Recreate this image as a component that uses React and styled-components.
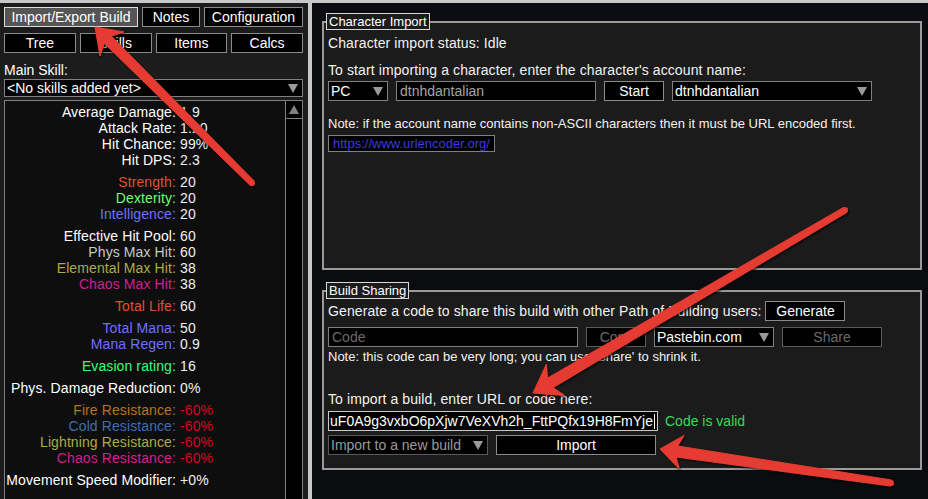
import styled, { createGlobalStyle } from 'styled-components';

const FONT = `"Liberation Sans", Arial, sans-serif`;

const C = {
    white: '#f2f2f2',
    phys: '#c8c8c8',
    str: '#e05030',
    dex: '#70ff70',
    int: '#7070ff',
    life: '#e05030',
    mana: '#7070ff',
    evasion: '#33ff77',
    fire: '#b97123',
    cold: '#3f6db3',
    lightning: '#adaa47',
    chaos: '#d02090',
    negative: '#dd0022',
};

const STATS = [
    [['Average Damage', '1.9'], ['Attack Rate', '1.20'], ['Hit Chance', '99%'], ['Hit DPS', '2.3']],
    [['Strength', '20', C.str], ['Dexterity', '20', C.dex], ['Intelligence', '20', C.int]],
    [['Effective Hit Pool', '60'], ['Phys Max Hit', '60', C.phys], ['Elemental Max Hit', '38', C.lightning], ['Chaos Max Hit', '38', C.chaos]],
    [['Total Life', '60', C.life]],
    [['Total Mana', '50', C.mana], ['Mana Regen', '0.9', C.mana]],
    [['Evasion rating', '16', C.evasion]],
    [['Phys. Damage Reduction', '0%']],
    [
        ['Fire Resistance', '-60%', C.fire, C.negative],
        ['Cold Resistance', '-60%', C.cold, C.negative],
        ['Lightning Resistance', '-60%', C.lightning, C.negative],
        ['Chaos Resistance', '-60%', C.chaos, C.negative],
    ],
    [['Movement Speed Modifier', '+0%']],
];

// red annotation arrows drawn over the screenshot
const ARROWS = [
    { tip: [95, 27], tail: [252, 183], headLen: 24, headHalf: 17, notch: 6, neck: 10, tailW: 6 },
    { tip: [533, 393], tail: [845, 210], headLen: 26, headHalf: 18, notch: 6, neck: 11, tailW: 6 },
    { tip: [660, 449], tail: [891, 483], headLen: 22, headHalf: 17, notch: 5, neck: 11, tailW: 6 },
];

function arrowShape({ tip, tail, headLen, headHalf, notch, neck, tailW }) {
    const dx = tail[0] - tip[0];
    const dy = tail[1] - tip[1];
    const len = Math.hypot(dx, dy);
    const ux = dx / len, uy = dy / len;
    const nx = -uy, ny = ux;
    const at = (d, w) => [tip[0] + ux * d + nx * w, tip[1] + uy * d + ny * w];
    const pts = [
        tip,
        at(headLen, headHalf),
        at(headLen - notch, neck / 2),
        [tail[0] + nx * tailW / 2, tail[1] + ny * tailW / 2],
        [tail[0] - nx * tailW / 2, tail[1] - ny * tailW / 2],
        at(headLen - notch, -neck / 2),
        at(headLen, -headHalf),
    ];
    return pts.map(p => p.map(v => v.toFixed(1)).join(',')).join(' ');
}

function App() {
    return (
        <Screen>
            <GlobalStyle />
            <TopStrip />
            <Body>
                <LeftPanel>
                    <TabRow>
                        <Tab $w={134} $active>Import/Export Build</Tab>
                        <Tab $w={58}>Notes</Tab>
                        <Tab $w={99}>Configuration</Tab>
                    </TabRow>
                    <TabGrid>
                        <Tab>Tree</Tab>
                        <Tab>Skills</Tab>
                        <Tab>Items</Tab>
                        <Tab>Calcs</Tab>
                    </TabGrid>
                    <FieldLabel>Main Skill:</FieldLabel>
                    <Select $h={18} $mt={1}>
                        <SelectText>&lt;No skills added yet&gt;</SelectText>
                        <DownArrow />
                    </Select>
                    <StatsBox>
                        <StatsList>
                            {STATS.map((group, gi) => (
                                <StatGroup key={gi}>
                                    {group.map(([label, value, labelColor, valueColor]) => (
                                        <StatRow key={label}>
                                            <StatLabel $color={labelColor}>{label}:</StatLabel>
                                            <StatValue $color={valueColor}>{value}</StatValue>
                                        </StatRow>
                                    ))}
                                </StatGroup>
                            ))}
                        </StatsList>
                        <Scrollbar>
                            <ScrollUp><UpArrow /></ScrollUp>
                        </Scrollbar>
                    </StatsBox>
                </LeftPanel>
                <Divider />
                <RightPanel>
                    <Frame $h={249}>
                        <Legend>Character Import</Legend>
                        <Line $mt={12}>Character import status: Idle</Line>
                        <Line $mt={11}>To start importing a character, enter the character's account name:</Line>
                        <Row $mt={3}>
                            <Select $w={60}>
                                <SelectText>PC</SelectText>
                                <DownArrow />
                            </Select>
                            <TextInput $w={200} $color="#a4a4a4">dtnhdantalian</TextInput>
                            <Button $w={60}>Start</Button>
                            <Select $w={200}>
                                <SelectText>dtnhdantalian</SelectText>
                                <DownArrow />
                            </Select>
                        </Row>
                        <Note $mt={16}>Note: if the account name contains non-ASCII characters then it must be URL encoded first.</Note>
                        <LinkButton>https://www.urlencoder.org/</LinkButton>
                    </Frame>
                    <Frame $h={180} $mt={20}>
                        <Legend>Build Sharing</Legend>
                        <Row $mt={9} $gap={4}>
                            <Line>Generate a code to share this build with other Path of Building users:</Line>
                            <Button $w={80}>Generate</Button>
                        </Row>
                        <Row $mt={6}>
                            <TextInput $w={250} $color="#6a6a6a">Code</TextInput>
                            <Button $w={60} $disabled>Copy</Button>
                            <Select $w={120}>
                                <SelectText>Pastebin.com</SelectText>
                                <DownArrow />
                            </Select>
                            <Button $w={100} $disabled>Share</Button>
                        </Row>
                        <Note $mt={3}>Note: this code can be very long; you can use 'Share' to shrink it.</Note>
                        <Line $mt={27}>To import a build, enter URL or code here:</Line>
                        <Row $mt={4} $gap={7}>
                            <CodeInput>
                                <CodeText>:uF0A9g3vxbO6pXjw7VeXVh2h_FttPQfx19H8FmYje</CodeText>
                                <Caret />
                            </CodeInput>
                            <Valid>Code is valid</Valid>
                        </Row>
                        <Row $mt={4}>
                            <Select $w={160} $disabled>
                                <SelectText $color="#9a9a9a">Import to a new build</SelectText>
                                <DownArrow />
                            </Select>
                            <Button $w={160}>Import</Button>
                        </Row>
                    </Frame>
                </RightPanel>
            </Body>
            <Overlay width="928" height="499" viewBox="0 0 928 499">
                <defs>
                    <filter id="arrowShadow" x="-10%" y="-10%" width="120%" height="120%">
                        <feDropShadow dx="1" dy="1.5" stdDeviation="1" floodColor="#000" floodOpacity="0.75" />
                    </filter>
                </defs>
                {ARROWS.map((a, i) => (
                    <g key={i} fill="#e63b30" filter="url(#arrowShadow)">
                        <polygon points={arrowShape(a)} strokeLinejoin="round" stroke="#e63b30" strokeWidth="1" />
                        <circle cx={a.tail[0]} cy={a.tail[1]} r={a.tailW / 2} />
                    </g>
                ))}
            </Overlay>
        </Screen>
    )
}

const GlobalStyle = createGlobalStyle`
html, body {
    margin:0;
    padding:0;
    background:#0b0c10;
}
* { box-sizing:border-box; }
`
const Screen = styled.div`
position:relative;
width:928px;
height:499px;
overflow:hidden;
display:flex;
flex-direction:column;
font-family:${FONT};
color:${C.white};
`
const TopStrip = styled.div`
height:3px;
background:#c8c8c8;
`
const Body = styled.div`
flex:1;
display:flex;
min-height:0;
`
const LeftPanel = styled.div`
width:308px;
background:#1c1c1c;
padding:4px 5px 0 4px;
display:flex;
flex-direction:column;
`
const Divider = styled.div`
width:4px;
background:#c8c8c8;
`
const TabRow = styled.div`
display:flex;
gap:4px;
`
const TabGrid = styled.div`
display:grid;
grid-template-columns:repeat(4, 1fr);
gap:4px;
margin-top:6px;
`
const Tab = styled.div`
width:${p => p.$w ? `${p.$w}px` : 'auto'};
height:20px;
border:1px solid ${p => p.$active ? '#dcdcdc' : '#8a8a8a'};
background:${p => p.$active ? '#555555' : '#000'};
color:#fff;
font-size:14px;
line-height:18px;
text-align:center;
white-space:nowrap;
`
const FieldLabel = styled.div`
margin-top:9px;
height:16px;
font-size:14px;
line-height:16px;
color:#fff;
`
const Select = styled.div`
position:relative;
width:${p => p.$w ? `${p.$w}px` : 'auto'};
height:${p => p.$h || 20}px;
margin-top:${p => p.$mt || 0}px;
border:1px solid ${p => p.$disabled ? '#5a5a5a' : '#808080'};
background:#000;
display:flex;
align-items:center;
padding:0 4px 0 2px;
`
const SelectText = styled.span`
flex:1;
font-size:14px;
color:${p => p.$color || '#fff'};
white-space:nowrap;
overflow:hidden;
`
const DownArrow = styled.span`
width:0;
height:0;
border-left:5px solid transparent;
border-right:5px solid transparent;
border-top:9px solid #9a9a9a;
`
const StatsBox = styled.div`
margin-top:3px;
flex:1;
min-height:0;
border:1px solid #808080;
border-bottom:none;
background:#0e0e0e;
display:flex;
`
const StatsList = styled.div`
flex:1;
padding-top:3px;
`
const StatGroup = styled.div`
& + & { margin-top:6px; }
`
const StatRow = styled.div`
display:grid;
grid-template-columns:171px 1fr;
height:16px;
font-size:14px;
line-height:16px;
letter-spacing:0.1px;
white-space:nowrap;
`
const StatLabel = styled.span`
text-align:right;
color:${p => p.$color || '#fff'};
`
const StatValue = styled.span`
padding-left:4px;
color:${p => p.$color || '#f0f0f0'};
`
const Scrollbar = styled.div`
width:17px;
border-left:1px solid #808080;
background:#000;
`
const ScrollUp = styled.div`
height:18px;
border-bottom:1px solid #808080;
display:flex;
align-items:center;
justify-content:center;
`
const UpArrow = styled.span`
width:0;
height:0;
border-left:5px solid transparent;
border-right:5px solid transparent;
border-bottom:9px solid #808080;
`
const RightPanel = styled.div`
flex:1;
background:#0b0c10;
padding:18px 6px 0 10px;
`
const Frame = styled.div`
position:relative;
height:${p => p.$h}px;
margin-top:${p => p.$mt || 0}px;
border:2px solid #9a9a9a;
background:#1b1b1b;
padding:0 4px;
display:flex;
flex-direction:column;
align-items:flex-start;
`
const Legend = styled.div`
position:absolute;
top:-10px;
left:2px;
height:17px;
padding:0 2px;
border:1px solid #d8d8d8;
background:#1b1b1b;
font-size:13px;
line-height:15px;
color:#fff;
`
const Line = styled.div`
margin-top:${p => p.$mt || 0}px;
height:16px;
font-size:14px;
line-height:16px;
letter-spacing:0.1px;
white-space:nowrap;
`
const Note = styled.div`
margin-top:${p => p.$mt || 0}px;
height:14px;
font-size:13px;
line-height:14px;
white-space:nowrap;
`
const Row = styled.div`
margin-top:${p => p.$mt || 0}px;
display:flex;
align-items:center;
gap:${p => p.$gap || 8}px;
`
const TextInput = styled.div`
width:${p => p.$w}px;
height:20px;
border:1px solid #808080;
background:#000;
padding:0 3px;
font-size:14px;
line-height:18px;
color:${p => p.$color};
`
const Button = styled.div`
width:${p => p.$w}px;
height:20px;
border:1px solid ${p => p.$disabled ? '#5a5a5a' : '#8a8a8a'};
background:#000;
font-size:14px;
line-height:18px;
text-align:center;
color:${p => p.$disabled ? '#6a6a6a' : '#fff'};
`
const LinkButton = styled.div`
margin-top:4px;
height:17px;
border:1px solid #808080;
background:#000;
padding:0 4px;
font-size:13px;
line-height:15px;
color:#3c3cdc;
`
const CodeInput = styled.div`
width:330px;
height:20px;
border:1px solid #c8c8c8;
background:#000;
display:flex;
justify-content:flex-end;
align-items:center;
overflow:hidden;
padding-right:2px;
`
const CodeText = styled.span`
font-size:14px;
color:#fff;
white-space:nowrap;
`
const Caret = styled.span`
flex:none;
width:1px;
height:15px;
margin-left:1px;
background:#fff;
`
const Valid = styled.span`
font-size:14px;
color:#33dd55;
`
const Overlay = styled.svg`
position:absolute;
left:0;
top:0;
pointer-events:none;
`

export default App;
